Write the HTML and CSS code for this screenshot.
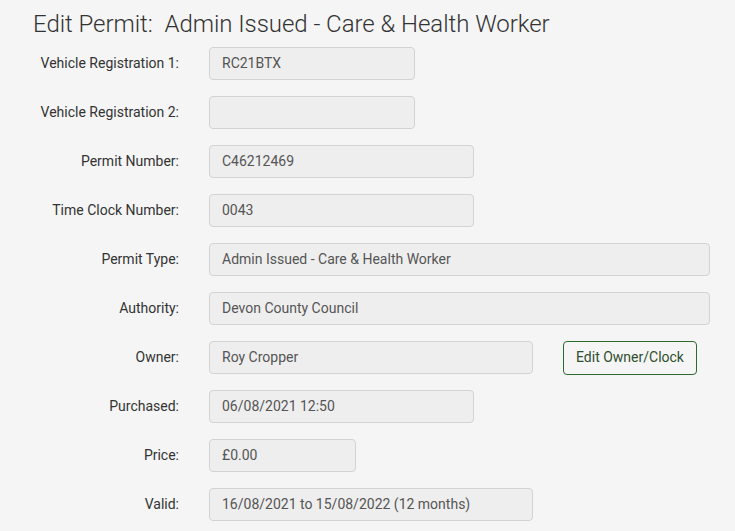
FILE: index.html
```html
<!DOCTYPE html>
<html lang="en">
<head>
<meta charset="utf-8">
<title>Edit Permit</title>
<link rel="stylesheet" href="styles.css">
</head>
<body>
<div class="page">
  <h1 class="title">Edit Permit:&nbsp; Admin Issued - Care &amp; Health Worker</h1>
  <div class="form">
    <div class="row"><label class="lbl">Vehicle Registration 1:</label><div class="field w206">RC21BTX</div></div>
    <div class="row"><label class="lbl">Vehicle Registration 2:</label><div class="field w206"></div></div>
    <div class="row"><label class="lbl">Permit Number:</label><div class="field w265">C46212469</div></div>
    <div class="row"><label class="lbl">Time Clock Number:</label><div class="field w265">0043</div></div>
    <div class="row"><label class="lbl">Permit Type:</label><div class="field w501">Admin Issued - Care &amp; Health Worker</div></div>
    <div class="row"><label class="lbl">Authority:</label><div class="field w501">Devon County Council</div></div>
    <div class="row"><label class="lbl">Owner:</label><div class="field w324">Roy Cropper</div><button class="btn">Edit Owner/Clock</button></div>
    <div class="row"><label class="lbl">Purchased:</label><div class="field w265">06/08/2021 12:50</div></div>
    <div class="row"><label class="lbl">Price:</label><div class="field w147">£0.00</div></div>
    <div class="row"><label class="lbl">Valid:</label><div class="field w324">16/08/2021 to 15/08/2022 (12 months)</div></div>
  </div>
</div>
</body>
</html>
```
FILE: styles.css
```css
html, body {
  margin: 0;
  padding: 0;
  background: #f5f5f5;
  font-family: Roboto, "Liberation Sans", sans-serif;
}
.page {
  padding: 10px 0 0 33px;
}
.title {
  margin: 0;
  font-size: 24px;
  font-weight: 300;
  line-height: 28px;
  letter-spacing: -0.04px;
  color: #333;
}
.form {
  display: flex;
  flex-direction: column;
  gap: 16px;
  margin-top: 9px;
}
.row {
  display: flex;
  align-items: center;
  height: 33px;
}
.lbl {
  width: 146px;
  text-align: right;
  font-size: 14px;
  color: #333;
  margin-right: 30px;
  padding-bottom: 2px;
}
.field {
  box-sizing: border-box;
  height: 33px;
  padding: 0 12px 1px;
  background: #eeeeee;
  border: 1px solid #d3d3d3;
  border-radius: 4px;
  font-size: 14px;
  color: #555;
  display: flex;
  align-items: center;
}
.w206 { width: 206px; }
.w265 { width: 265px; }
.w501 { width: 501px; }
.w324 { width: 324px; }
.w147 { width: 147px; }
.btn {
  box-sizing: border-box;
  margin-left: 30px;
  width: 134px;
  height: 34px;
  background: transparent;
  border: 1px solid #2d6a2d;
  border-radius: 4px;
  font-family: Roboto, "Liberation Sans", sans-serif;
  font-size: 14px;
  color: #2f4f2f;
  padding: 0 0 2px;
}
```
